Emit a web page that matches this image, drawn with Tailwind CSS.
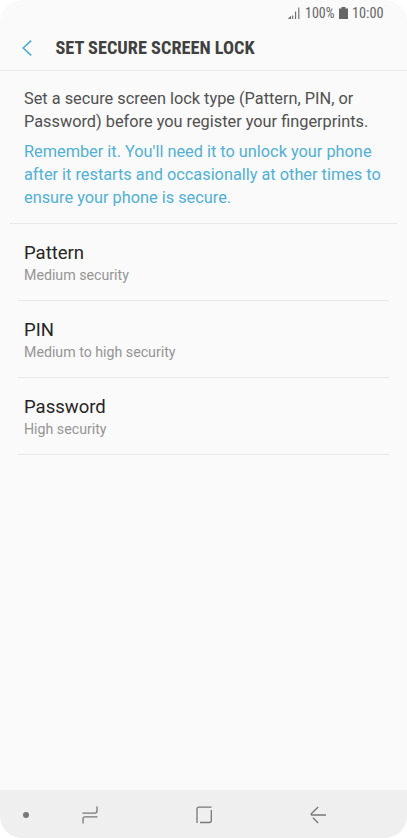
<!DOCTYPE html>
<html lang="en">
<head>
<meta charset="utf-8">
<title>Set secure screen lock</title>
<script src="https://cdn.jsdelivr.net/npm/@tailwindcss/browser@4"></script>
</head>
<body class="bg-white font-['Roboto',sans-serif]">
<main class="flex h-[838px] w-[407px] flex-col overflow-hidden rounded-[22px] bg-[#fafafa]">
  <div class="flex h-[25px] shrink-0 items-center justify-end pr-[23px] text-[#666]">
    <svg class="mr-[5px] h-3 w-3" viewBox="0 0 12 12" stroke="currentColor" stroke-width="1.1" fill="none"><path d="M.5 12 2.5 10v2M4.7 12V8.5M7.6 12V4.5M10.8 12V.5"/></svg>
    <span class="w-[30px] text-[14px] leading-5 whitespace-nowrap font-['Roboto_Condensed',Roboto,sans-serif]">100%</span>
    <svg class="mr-[4px] ml-1 h-3 w-[9px]" viewBox="0 0 9 12" fill="currentColor"><path d="M2.5 0h4v1.5H9V12H0V1.5h2.5z"/></svg>
    <span class="w-8 text-[14.3px] leading-5 whitespace-nowrap font-['Roboto_Condensed',Roboto,sans-serif]">10:00</span>
  </div>
  <header class="flex h-[46px] shrink-0 items-center border-b border-[#e7e7e7] pl-[22px] text-[#404040]">
    <svg class="h-4 w-[10px]" viewBox="0 0 10 16" fill="none" stroke="#48a9cf" stroke-width="1.5"><path d="M9.2.6 1.2 8l8 7.4"/></svg>
    <h1 class="ml-[23.5px] text-[18.3px] font-bold leading-6 whitespace-nowrap font-['Roboto_Condensed',Roboto,sans-serif]">SET SECURE SCREEN LOCK</h1>
  </header>
  <section class="mx-[10px] h-[153px] shrink-0 border-b border-[#e7e7e7] pt-4 pl-[14px] text-[16.32px] leading-[23px] whitespace-nowrap">
    <p class="text-[#505050]">Set a secure screen lock type (Pattern, PIN, or<br>Password) before you register your fingerprints.</p>
    <p class="mt-[7px] text-[#50b0d5]">Remember it. You'll need it to unlock your phone<br>after it restarts and occasionally at other times to<br>ensure your phone is secure.</p>
  </section>
  <ul class="mr-[18px] ml-[18px] flex-1">
    <li class="h-[77px] border-b border-[#e7e7e7] pt-[17px] pl-[6px]"><h2 class="text-[18.5px] leading-6 text-[#252525]">Pattern</h2><p class="text-[14.2px] leading-5 text-[#959595]">Medium security</p></li>
    <li class="h-[77px] border-b border-[#e7e7e7] pt-[17px] pl-[6px]"><h2 class="text-[18.5px] leading-6 text-[#252525]">PIN</h2><p class="text-[14.2px] leading-5 text-[#959595]">Medium to high security</p></li>
    <li class="h-[77px] border-b border-[#e7e7e7] pt-[17px] pl-[6px]"><h2 class="text-[18.5px] leading-6 text-[#252525]">Password</h2><p class="text-[14.2px] leading-5 text-[#959595]">High security</p></li>
  </ul>
  <nav class="flex h-12 shrink-0 items-center bg-[#efefef] pt-px pl-[23px] text-[#777]">
    <span class="h-[6px] w-[6px] rounded-full bg-[#777]"></span>
    <svg class="ml-[53px] h-[18px] w-4" viewBox="0 0 16 18" fill="none" stroke="currentColor" stroke-width="1.3"><path d="M.5 7.1H13q2 0 2-2V.5M15.5 10.9H3q-2 0-2 2v4.6"/></svg>
    <svg class="ml-[98px] h-[18px] w-4" viewBox="0 0 16 18" fill="none" stroke="currentColor" stroke-width="1.3"><path d="M1 17V3q0-1.8 2-1.8h12.5M15.3 4v10.5q0 2-2 2H4"/></svg>
    <svg class="ml-[98px] h-[18px] w-4" viewBox="0 0 16 18" fill="none" stroke="currentColor" stroke-width="1.3"><path d="M8.2 1 1.8 7.2Q.2 9 2.2 9H16M2.9 11.7 8.2 17"/></svg>
  </nav>
</main>
</body>
</html>
